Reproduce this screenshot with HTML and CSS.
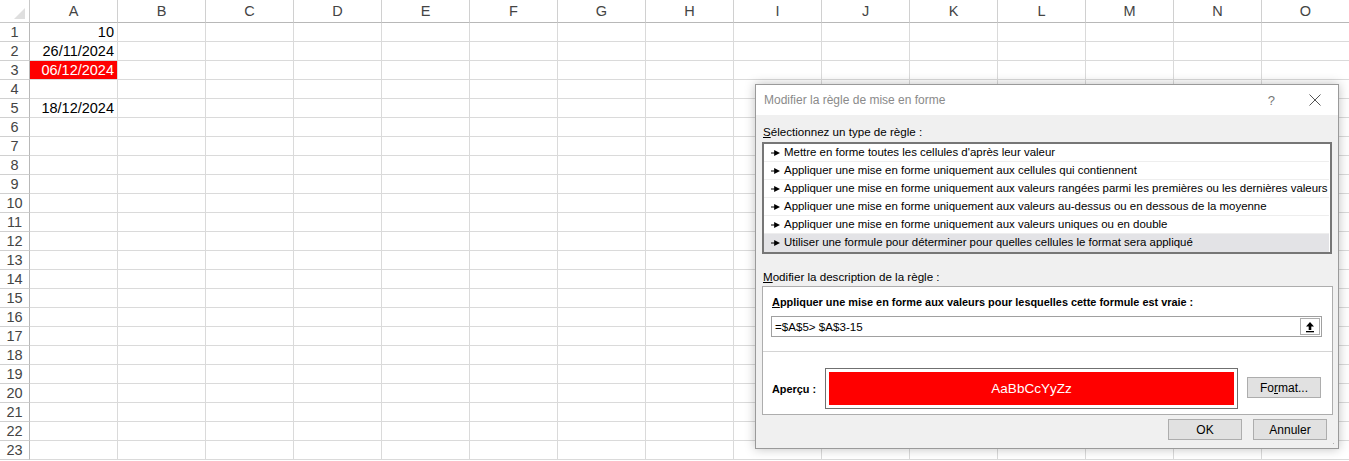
FILE: index.html
```html
<!DOCTYPE html>
<html lang="fr">
<head>
  <meta charset="UTF-8" />
  <title>Modifier la règle de mise en forme</title>
  <link rel="stylesheet" href="styles.css">
</head>
<body>
  <div class="sheet" id="sheet"></div>

  <div class="dialog">
    <div class="titlebar">
      <span class="title">Modifier la règle de mise en forme</span>
      <span class="help">?</span>
      <svg class="close" width="12" height="12" viewBox="0 0 12 12">
        <path d="M0.5 0.5 L11.5 11.5 M11.5 0.5 L0.5 11.5" stroke="#555" stroke-width="1" fill="none"/>
      </svg>
    </div>

    <div class="dialog-body">
      <div class="label"><u>S</u>électionnez un type de règle :</div>
      <ul class="rule-list">
        <li>Mettre en forme toutes les cellules d'après leur valeur</li>
        <li>Appliquer une mise en forme uniquement aux cellules qui contiennent</li>
        <li>Appliquer une mise en forme uniquement aux valeurs rangées parmi les premières ou les dernières valeurs</li>
        <li>Appliquer une mise en forme uniquement aux valeurs au-dessus ou en dessous de la moyenne</li>
        <li>Appliquer une mise en forme uniquement aux valeurs uniques ou en double</li>
        <li class="selected">Utiliser une formule pour déterminer pour quelles cellules le format sera appliqué</li>
      </ul>

      <div class="label label-desc"><u>M</u>odifier la description de la règle :</div>
      <div class="group">
        <div class="group-top">
          <div class="strong"><u>A</u>ppliquer une mise en forme aux valeurs pour lesquelles cette formule est vraie :</div>
          <div class="formula">
            <span class="formula-text">=$A$5&gt; $A$3-15</span>
            <span class="ref-btn">
              <svg width="12" height="12" viewBox="0 0 12 12">
                <path d="M6 1 L10 5.5 L7.3 5.5 L7.3 9 L4.7 9 L4.7 5.5 L2 5.5 Z" fill="#000"/>
                <rect x="2" y="10" width="8" height="1.3" fill="#000"/>
              </svg>
            </span>
          </div>
        </div>
        <div class="preview-row">
          <span class="strong">Aperçu :</span>
          <div class="preview"><div class="preview-fill">AaBbCcYyZz</div></div>
          <button class="btn">Fo<u>r</u>mat...</button>
        </div>
      </div>

      <div class="actions">
        <button class="btn">OK</button>
        <button class="btn">Annuler</button>
      </div>
    </div>
    <div class="grip"></div>
  </div>

  <script>
    // grille Excel : en-tetes + 23 lignes
    const cols = "ABCDEFGHIJKLMNO".split("");
    const data = { 1: "10", 2: "26/11/2024", 3: "06/12/2024", 5: "18/12/2024" };
    const sheet = document.getElementById("sheet");
    let html = '<div class="corner"><span class="corner-tri"></span></div>';
    for (const c of cols) html += `<div class="col-head">${c}</div>`;
    for (let r = 1; r <= 23; r++) {
      html += `<div class="row-head">${r}</div>`;
      for (const c of cols) {
        let cls = "cell";
        let txt = "";
        if (c === "A" && data[r]) txt = data[r];
        if (c === "A" && r === 3) cls += " cell-red";
        html += `<div class="${cls}">${txt}</div>`;
      }
    }
    sheet.innerHTML = html;
  </script>
</body>
</html>
```

FILE: styles.css
```css
body { margin: 0; overflow: hidden; background: #fff; font-family: "Liberation Sans", Arial, sans-serif; }

.sheet { display: grid; grid-template-columns: 30px repeat(15, 88px); grid-template-rows: 23px repeat(23, 19px); font-size: 14.5px; }
.sheet > div { box-sizing: border-box; border-right: 1px solid #dadada; border-bottom: 1px solid #dadada; white-space: nowrap; overflow: hidden; }
.corner { display: flex; align-items: flex-end; justify-content: flex-end; padding: 0 4px 3px 0; border-color: #c8c8c8 !important; }
.corner-tri { width: 11px; height: 11px; background: #dfdfdf; clip-path: polygon(100% 0, 100% 100%, 0 100%); }
.col-head { text-align: center; line-height: 22px; color: #444; border-right-color: #d0d0d0 !important; border-bottom-color: #b8b8b8 !important; }
.row-head { text-align: center; line-height: 19px; color: #444; border-right-color: #b8b8b8 !important; border-bottom-color: #d0d0d0 !important; }
.cell { text-align: right; padding-right: 3px; line-height: 19px; color: #000; }
.cell-red { background: #ff0000; color: #fff; }

.dialog { position: absolute; left: 755px; top: 84px; width: 584px; height: 365px; box-sizing: border-box; border: 1px solid #9a9a9a; background: #f0f0f0; box-shadow: 0 0 10px rgba(0,0,0,0.25); font-size: 11.6px; color: #000; }
.titlebar { display: flex; align-items: center; height: 30px; background: #fff; padding: 0 0 0 8px; }
.title { flex: 1; color: #8a8a8a; font-size: 12px; }
.help { color: #777; font-size: 13px; margin-right: 34px; }
.close { margin-right: 17px; }

.dialog-body { padding: 9px 6px 0 6px; }
.label { line-height: 16px; padding-left: 1px; }
.label-desc { margin-top: 15px; }

.rule-list { list-style: none; margin: 2px 0 0 0; padding: 0; background: #fff; border: 2px solid #767676; font-size: 11.45px; }
.rule-list li { height: 18px; line-height: 17px; box-sizing: border-box; border-bottom: 1px solid #eeeeee; padding-left: 20px; margin-right: 1px; position: relative; white-space: nowrap; }
.rule-list li:last-child { border-bottom: none; }
.rule-list li::before { content: ""; position: absolute; left: 7px; top: 6px; width: 9px; height: 6px; background: #000; clip-path: polygon(0 42%, 35% 42%, 35% 0, 100% 50%, 35% 100%, 35% 58%, 0 58%); }
.rule-list li.selected { background: #e3e3e6; }

.group { margin-top: 1px; margin-right: -1px; background: #fff; border: 1px solid #adadad; }
.group-top { padding: 7px 10px 14px 8px; border-bottom: 1px solid #d4d4d4; }
.strong { font-weight: bold; font-size: 10.9px; line-height: 16px; padding-left: 1px; }
.formula { display: flex; align-items: center; height: 21px; box-sizing: border-box; margin-top: 6px; border: 1px solid #a0a0a0; padding: 0 1px 0 3px; }
.formula-text { flex: 1; }
.ref-btn { display: flex; align-items: center; justify-content: center; width: 20px; height: 17px; box-sizing: border-box; border: 1px solid #adadad; background: #fff; }

.preview-row { display: flex; align-items: center; padding: 16px 11px 5px 8px; }
.preview-row .strong { width: 53px; }
.preview { width: 413px; height: 41px; box-sizing: border-box; border: 1px solid #707070; padding: 3px; background: #fff; }
.preview-fill { height: 100%; background: #ff0000; color: #fff; font-size: 13.5px; display: flex; align-items: center; justify-content: center; }
.preview-row .btn { margin-left: 9px; margin-top: -2px; }

.btn { width: 74px; height: 21px; box-sizing: border-box; background: #e1e1e1; border: 1px solid #adadad; font-family: "Liberation Sans", Arial, sans-serif; font-size: 12px; color: #000; padding: 0; }
.actions { display: flex; justify-content: flex-end; gap: 11px; margin-top: 4px; padding-right: 5px; }

.grip { position: absolute; right: 2px; bottom: 2px; width: 7px; height: 7px; background: radial-gradient(circle, #b0b0b0 0.8px, transparent 1px) 0 0 / 3px 3px; clip-path: polygon(100% 0, 100% 100%, 0 100%); }
```
